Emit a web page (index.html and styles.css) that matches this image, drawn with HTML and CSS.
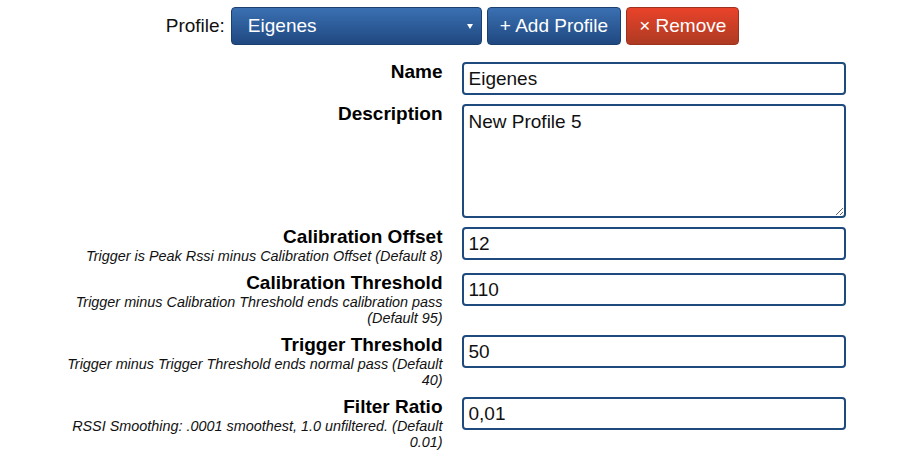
FILE: index.html
```html
<!DOCTYPE html>
<html lang="en">
<head>
<meta charset="utf-8">
<title>Profile</title>
<link rel="stylesheet" href="styles.css">
</head>
<body>
<div class="toolbar">
  <span class="profile-label">Profile:</span>
  <div class="select" role="listbox"><span>Eigenes</span><span class="caret"></span></div>
  <button class="btn btn-blue">+ Add Profile</button>
  <button class="btn btn-red">× Remove</button>
</div>
<div class="form">
  <div class="label"><div class="title">Name</div></div>
  <div class="field"><input class="input" type="text" value="Eigenes"></div>

  <div class="label"><div class="title">Description</div></div>
  <div class="field"><textarea class="input textarea">New Profile 5</textarea></div>

  <div class="label"><div class="title">Calibration Offset</div><div class="hint">Trigger is Peak Rssi minus Calibration Offset (Default 8)</div></div>
  <div class="field"><input class="input" type="text" value="12"></div>

  <div class="label"><div class="title">Calibration Threshold</div><div class="hint">Trigger minus Calibration Threshold ends calibration pass (Default 95)</div></div>
  <div class="field"><input class="input" type="text" value="110"></div>

  <div class="label"><div class="title">Trigger Threshold</div><div class="hint">Trigger minus Trigger Threshold ends normal pass (Default 40)</div></div>
  <div class="field"><input class="input" type="text" value="50"></div>

  <div class="label"><div class="title">Filter Ratio</div><div class="hint">RSSI Smoothing: .0001 smoothest, 1.0 unfiltered. (Default 0.01)</div></div>
  <div class="field"><input class="input" type="text" value="0,01"></div>
</div>
</body>
</html>
```
FILE: styles.css
```css
html, body {
  margin: 0;
  padding: 0;
  background: #fff;
}
body {
  font-family: "Liberation Sans", Arial, sans-serif;
  color: #000;
  font-size: 19px;
}
.toolbar {
  display: flex;
  justify-content: center;
  align-items: center;
  gap: 5px;
  padding-top: 7px;
}
.profile-label {
  font-size: 19px;
  margin-right: 1px;
  color: #111;
}
.select {
  position: relative;
  box-sizing: border-box;
  width: 251px;
  height: 38px;
  border: 1px solid #1b3f6e;
  border-radius: 4px;
  background: linear-gradient(#3a70b2, #204880);
  color: #fff;
  font-size: 19px;
  padding-left: 16px;
  display: flex;
  align-items: center;
}
.caret {
  position: absolute;
  right: 8px;
  top: 16px;
  width: 0;
  height: 0;
  border-left: 3px solid transparent;
  border-right: 3px solid transparent;
  border-top: 5px solid #fff;
}
.btn {
  box-sizing: border-box;
  height: 38px;
  padding: 0 12px;
  font-family: "Liberation Sans", Arial, sans-serif;
  font-size: 19px;
  color: #fff;
  border-radius: 4px;
  cursor: pointer;
}
.btn-blue {
  border: 1px solid #1b3f6e;
  background: linear-gradient(#3a70b2, #204880);
}
.btn-red {
  border: 1px solid #9c3320;
  background: linear-gradient(#e9432a, #ae3a22);
}
.form {
  display: grid;
  grid-template-columns: 383px 384px;
  column-gap: 19px;
  row-gap: 9px;
  justify-content: center;
  margin-top: 17px;
}
.label {
  text-align: right;
}
.title {
  font-weight: bold;
  font-size: 19px;
  line-height: 21px;
  margin-top: -1px;
  margin-bottom: 1px;
}
.hint {
  font-style: italic;
  font-size: 14.4px;
  line-height: 16px;
  color: #111;
}
.input {
  display: block;
  box-sizing: border-box;
  width: 100%;
  height: 33px;
  margin: 0;
  border: 2px solid #1e4a7e;
  border-radius: 4px;
  padding: 0 5px;
  font-family: "Liberation Sans", Arial, sans-serif;
  font-size: 19px;
  color: #111;
  background: #fff;
}
.textarea {
  height: 114px;
  padding: 5px;
  resize: vertical;
}
```
